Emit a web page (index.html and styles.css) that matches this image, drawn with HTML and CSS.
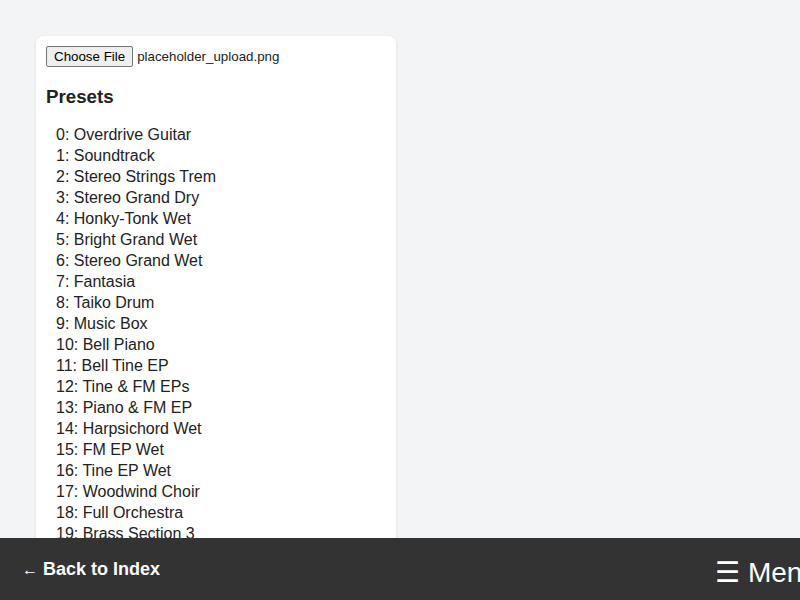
FILE: index.html
```html
<!DOCTYPE html>
<html lang="en">
<head>
<meta charset="utf-8">
<title>Presets</title>
<link rel="stylesheet" href="styles.css">
</head>
<body>
<main class="page">
  <section class="card">
    <div class="file">
      <button class="file-btn" type="button">Choose File</button>
      <span class="file-name">placeholder_upload.png</span>
    </div>
    <h3 class="title">Presets</h3>
    <ul class="presets">
      <li>0: Overdrive Guitar</li>
      <li>1: Soundtrack</li>
      <li>2: Stereo Strings Trem</li>
      <li>3: Stereo Grand Dry</li>
      <li>4: Honky-Tonk Wet</li>
      <li>5: Bright Grand Wet</li>
      <li>6: Stereo Grand Wet</li>
      <li>7: Fantasia</li>
      <li>8: Taiko Drum</li>
      <li>9: Music Box</li>
      <li>10: Bell Piano</li>
      <li>11: Bell Tine EP</li>
      <li>12: Tine &amp; FM EPs</li>
      <li>13: Piano &amp; FM EP</li>
      <li>14: Harpsichord Wet</li>
      <li>15: FM EP Wet</li>
      <li>16: Tine EP Wet</li>
      <li>17: Woodwind Choir</li>
      <li>18: Full Orchestra</li>
      <li>19: Brass Section 3</li>
    </ul>
  </section>
</main>
<nav class="bar">
  <a class="back" href="#"><span class="arrow">←</span> Back to Index</a>
  <span class="menu">☰ Menu</span>
</nav>
</body>
</html>
```
FILE: styles.css
```css
html, body {
  margin: 0;
  padding: 0;
}
body {
  background: #f3f4f6;
  font-family: "Liberation Sans", Arial, sans-serif;
  color: #222;
  overflow: hidden;
}
.page {
  padding: 36px 0 0 36px;
}
.card {
  box-sizing: border-box;
  width: 360px;
  background: #fff;
  border-radius: 8px;
  box-shadow: 0 1px 4px rgba(0, 0, 0, 0.08);
  padding: 10px;
}
.file {
  display: flex;
  align-items: center;
  gap: 4px;
  height: 21px;
  font-family: "Liberation Sans", Arial, sans-serif;
  font-size: 13.33px;
  color: #222;
}
.file-btn {
  font-family: "Liberation Sans", Arial, sans-serif;
  font-size: 13.33px;
  color: #000;
  background: #efefef;
  border: 1px solid #767676;
  border-radius: 2px;
  height: 21px;
  padding: 1px 7px;
  margin: 0;
  line-height: 15px;
}
.title {
  font-size: 18.72px;
  font-weight: bold;
  margin: 18.7px 0 16.7px;
}
.presets {
  list-style: none;
  margin: 0;
  padding: 0 0 0 10px;
  font-size: 16px;
  line-height: 21px;
}
.bar {
  position: fixed;
  left: 0;
  right: 0;
  bottom: 0;
  height: 62px;
  background: #333;
  color: #fff;
  display: flex;
  align-items: center;
  justify-content: space-between;
  padding: 0 0 0 22px;
  overflow: hidden;
}
.back {
  color: #fff;
  text-decoration: none;
  font-weight: bold;
  font-size: 18px;
}
.arrow {
  font-weight: normal;
  font-size: 16px;
}
.menu {
  font-size: 28px;
  white-space: nowrap;
  margin-right: -18px;
  padding-top: 6px;
}
```
